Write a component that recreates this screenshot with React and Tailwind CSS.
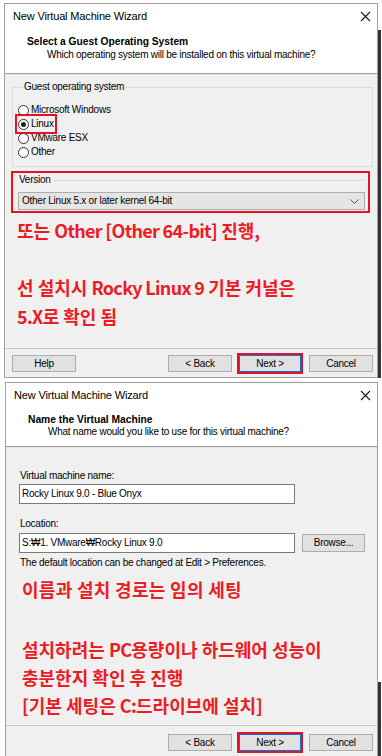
import React from "react";

const RED = "#ec1c24";

function CloseX() {
  return (
    <svg width="11" height="11" viewBox="0 0 11 11" className="shrink-0">
      <path d="M1 1 L10 10 M10 1 L1 10" stroke="#1a1a1a" strokeWidth="1.1" fill="none" />
    </svg>
  );
}

function Radio({ label, checked }) {
  return (
    <div className="flex items-center h-[14px] gap-[2px]">
      <span className="w-[11px] h-[11px] rounded-full border border-[#333] bg-white flex items-center justify-center">
        {checked && <span className="w-[5px] h-[5px] rounded-full bg-[#222]" />}
      </span>
      <span>{label}</span>
    </div>
  );
}

function Btn({ children, className = "", primary }) {
  return (
    <div
      className={
        "h-[17px] flex items-center justify-center bg-[#e1e1e1] border " +
        (primary ? "border-[#0078d7] " : "border-[#adadad] ") +
        className
      }
    >
      {children}
    </div>
  );
}

function TitleArea({ heading, sub, subPad }) {
  return (
    <div className="bg-white">
      <div className="h-[24px] flex items-center justify-between pl-[8px] pr-[6px] text-[11px] tracking-[-0.15px]">
        <span>New Virtual Machine Wizard</span>
        <CloseX />
      </div>
      <div className={subPad}>
        <div className="pl-[22px] font-bold text-[10.25px] tracking-normal">{heading}</div>
        <div className="pl-[42px]">{sub}</div>
      </div>
    </div>
  );
}

function Separator() {
  return <div className="h-[2px] border-t border-[#a0a0a0] bg-[#e3e3e3]" />;
}

function Footer({ help, pt }) {
  return (
    <div className={"mt-auto border-t border-[#c8c8c8] flex items-center pr-[4px] " + pt}>
      {help && <Btn className="w-[64px] ml-[7px]">Help</Btn>}
      <Btn className="w-[64px] ml-auto">&lt; Back</Btn>
      <Btn primary className="w-[62px] ml-[7px] outline-2 outline-[#e81123]">Next &gt;</Btn>
      <Btn className="w-[64px] ml-[8px]">Cancel</Btn>
    </div>
  );
}

function Input({ value }) {
  return (
    <div className="h-[20px] w-[276px] border border-[#7a7a7a] bg-white flex items-center pl-[2px]">
      {value}
    </div>
  );
}

// latin parts of the red notes sit a little tighter than the hangul
function L({ children }) {
  return <span className="tracking-[-0.7px]">{children}</span>;
}

export default function App() {
  const kr = { fontFamily: '"Noto Sans CJK KR", "Noto Sans", sans-serif', color: RED };
  return (
    <div
      className="w-[382px] h-[756px] overflow-hidden bg-white text-[10px] text-black leading-[12px] tracking-[-0.25px]"
      style={{ fontFamily: '"Liberation Sans", Arial, sans-serif' }}
    >
      {/* first wizard page */}
      <div className="flex pt-[3px] pl-[4px]">
        <div className="w-[374px] h-[375px] border border-[#a0a0a0] bg-[#f0f0f0] flex flex-col">
          <TitleArea
            heading="Select a Guest Operating System"
            sub="Which operating system will be installed on this virtual machine?"
            subPad="pt-[8px] pb-[12px] flex flex-col gap-[1px]"
          />
          <Separator />

          <fieldset className="mt-[6px] ml-[7px] mr-[4px] border border-[#dcdcdc] pl-[5px] pt-[10px] pb-[7px]">
            <legend className="ml-[5px] px-[1px]">Guest operating system</legend>
            <Radio label="Microsoft Windows" />
            <div className="w-fit outline-2 outline-offset-1 outline-[#e81123]">
              <Radio label="Linux" checked />
            </div>
            <Radio label="VMware ESX" />
            <Radio label="Other" />
          </fieldset>

          <div className="mt-[4px] ml-[6px] w-[359px] h-[42px] border-2 border-[#e81123] pl-[5px] pr-[3px]">
            <div className="flex items-center gap-[3px] h-[12px] mt-[1px]">
              <span className="pl-[1px]">Version</span>
              <span className="flex-1 border-t border-[#dcdcdc]" />
            </div>
            <div className="mt-[6px] h-[18px] w-[347px] bg-[#e5e5e5] border border-[#adadad] flex items-center justify-between pl-[3px] pr-[5px]">
              <span>Other Linux 5.x or later kernel 64-bit</span>
              <svg width="9" height="5" viewBox="0 0 9 5">
                <path d="M0.5 0.5 L4.5 4.5 L8.5 0.5" stroke="#555" fill="none" />
              </svg>
            </div>
          </div>

          <div className="mt-[3px] pl-[12px] text-[18px] font-bold leading-[28.5px] tracking-normal" style={kr}>
            <div>또는 <L>Other [Other 64-bit]</L> 진행,</div>
            <div>&nbsp;</div>
            <div>선 설치시 <L>Rocky Linux 9</L> 기본 커널은</div>
            <div><L>5.X</L>로 확인 됨</div>
          </div>

          <Footer help pt="pt-[6px] pb-[5px]" />
        </div>
        <div className="w-[3px] mt-[27px] h-[348px] bg-[#333]" />
      </div>

      {/* second wizard page */}
      <div className="flex pt-[4px] pl-[5px]">
        <div className="w-[373px] h-[380px] border border-[#a0a0a0] bg-[#f0f0f0] flex flex-col">
          <TitleArea
            heading="Name the Virtual Machine"
            sub="What name would you like to use for this virtual machine?"
            subPad="pt-[7px] pb-[8px] flex flex-col"
          />
          <Separator />

          <div className="pl-[13px] pt-[22px]">
            <div className="pl-[1px]">Virtual machine name:</div>
            <div className="mt-[2px]">
              <Input value="Rocky Linux 9.0 - Blue Onyx" />
            </div>
            <div className="mt-[14px] pl-[1px]">Location:</div>
            <div className="mt-[3px] flex items-center gap-[7px]">
              <Input value="S:₩1. VMware₩Rocky Linux 9.0" />
              <Btn className="w-[63px] h-[18px] border-[#0078d7]">Browse...</Btn>
            </div>
            <div className="mt-[4px] pl-[1px]">
              The default location can be changed at Edit &gt; Preferences.
            </div>
          </div>

          <div className="pl-[16px] text-[18px] font-bold leading-[28px] tracking-normal" style={kr}>
            <div className="mt-[6px] tracking-[0.3px]">이름과 설치 경로는 임의 세팅</div>
            <div className="mt-[32px]">설치하려는 <L>PC</L>용량이나 하드웨어 성능이</div>
            <div>충분한지 확인 후 진행</div>
            <div>[기본 세팅은 <L>C:</L>드라이브에 설치]</div>
          </div>

          <Footer pt="pt-[8px] pb-[10px]" />
        </div>
        <div className="w-[3px] mt-[300px] h-[80px] bg-[#333]" />
      </div>
    </div>
  );
}
